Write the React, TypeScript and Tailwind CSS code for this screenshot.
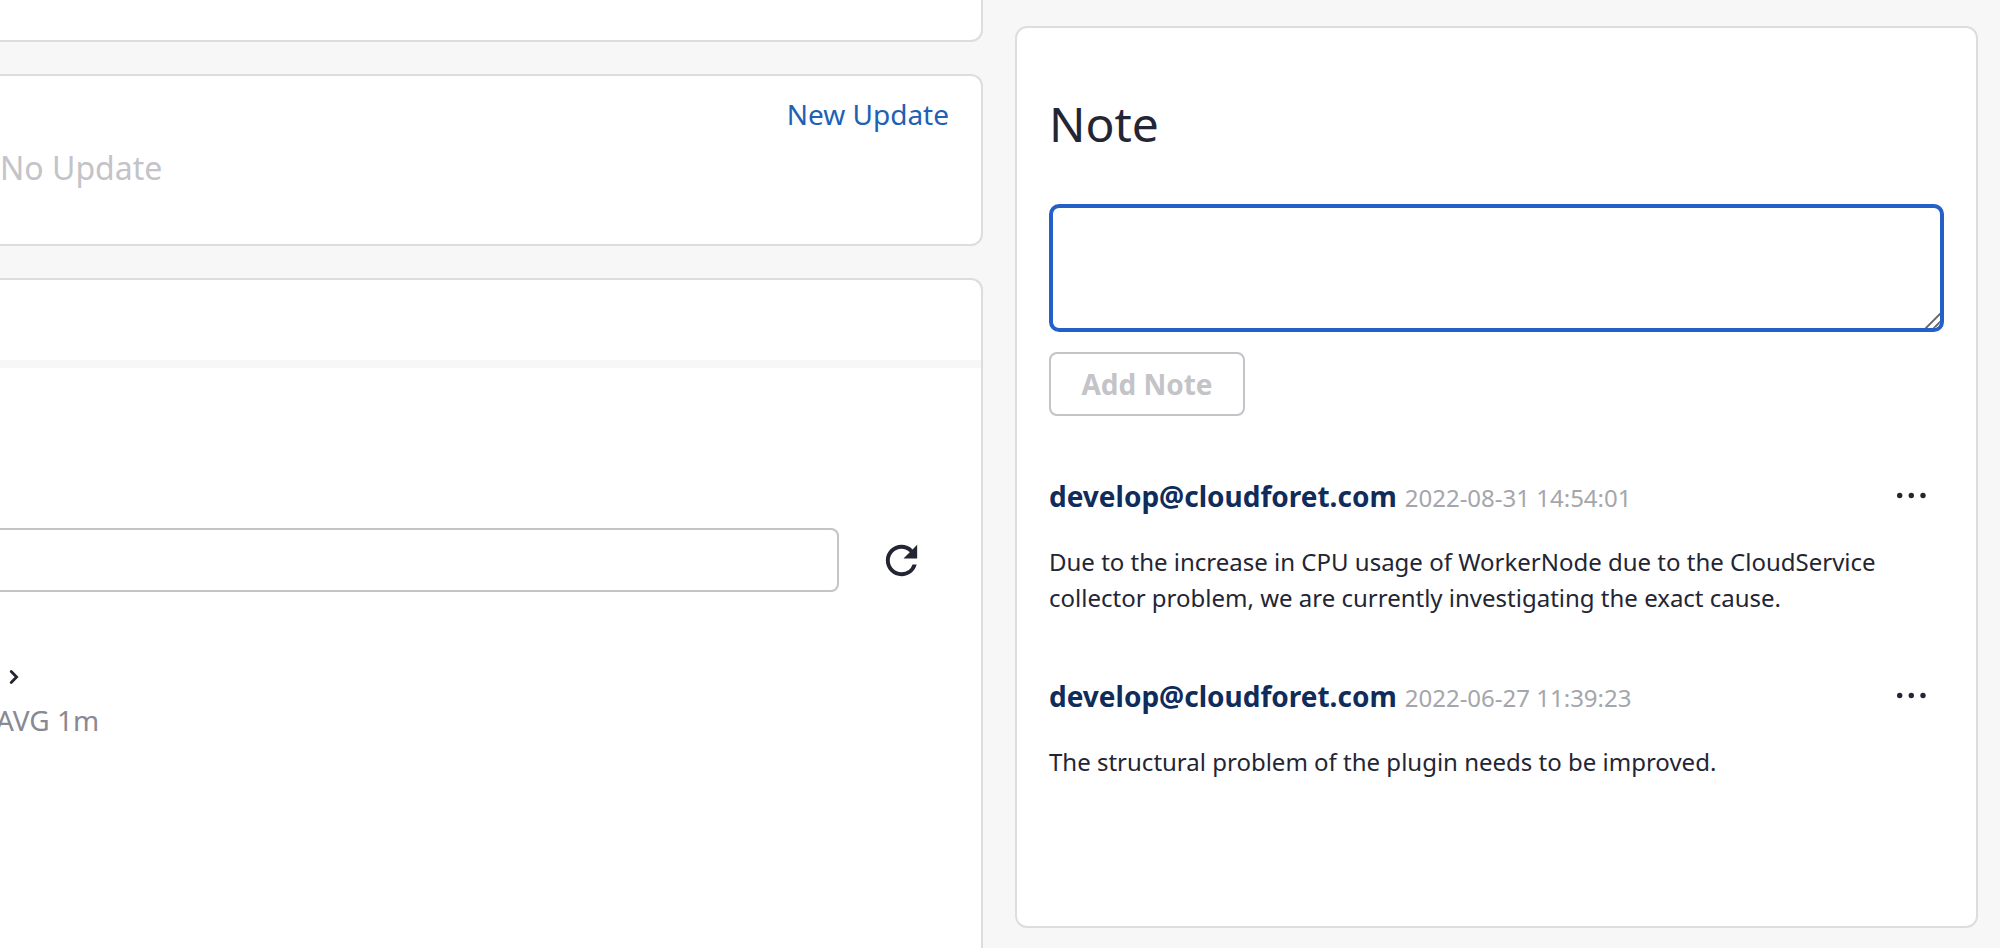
import { useState, type ReactNode } from "react";

type Note = { author: string; date: string; text: string };

const notes: Note[] = [
  {
    author: "develop@cloudforet.com",
    date: "2022-08-31 14:54:01",
    text: "Due to the increase in CPU usage of WorkerNode due to the CloudService collector problem, we are currently investigating the exact cause.",
  },
  {
    author: "develop@cloudforet.com",
    date: "2022-06-27 11:39:23",
    text: "The structural problem of the plugin needs to be improved.",
  },
];

function RefreshIcon() {
  return (
    <svg viewBox="0 0 24 24" className="size-[47px]" fill="currentColor" aria-hidden="true">
      <path d="M17.65 6.35A7.958 7.958 0 0 0 12 4c-4.42 0-7.99 3.58-7.99 8s3.57 8 7.99 8c3.73 0 6.84-2.55 7.73-6h-2.08A5.99 5.99 0 0 1 12 18c-3.31 0-6-2.69-6-6s2.69-6 6-6c1.66 0 3.14.69 4.22 1.78L13 11h7V4l-2.35 2.35z" />
    </svg>
  );
}

function MoreIcon() {
  return (
    <svg viewBox="0 0 32 32" className="size-8" fill="currentColor" aria-hidden="true">
      <circle cx="3.7" cy="15.5" r="2.7" />
      <circle cx="15.3" cy="15.5" r="2.7" />
      <circle cx="27" cy="15.5" r="2.7" />
    </svg>
  );
}

function LeftCard({ className, children }: { className: string; children?: ReactNode }) {
  return (
    <section className={`border-r-2 border-[#dddddf] bg-white ${className}`}>{children}</section>
  );
}

function NoteItem({ note }: { note: Note }) {
  return (
    <li className="mt-15">
      <div className="flex h-[42px] items-center">
        <div className="flex items-baseline gap-2 leading-10">
          <strong className="text-[28px] font-bold text-[#0f2c5b]">{note.author}</strong>
          <time className="text-2xl/10 text-[#a5a6ab]">{note.date}</time>
        </div>
        <button type="button" aria-label="More actions" className="ml-auto flex h-10 w-16 items-center justify-center self-start">
          <MoreIcon />
        </button>
      </div>
      <p className="mt-[26px] text-2xl/9">{note.text}</p>
    </li>
  );
}

export default function App() {
  const [draft, setDraft] = useState("");

  return (
    <main className="grid min-h-screen grid-cols-[983fr_963fr] gap-8 overflow-hidden bg-[#f7f7f7] pr-[22px] font-['Noto_Sans',sans-serif] text-[#232533]">
      <div className="flex min-w-0 flex-col gap-8">
        <LeftCard className="h-[42px] rounded-br-xl border-b-2" />

        <LeftCard className="rounded-r-xl border-y-2 pt-[18px] pb-[54px]">
          <div className="flex justify-end pr-8">
            <a href="#new-update" className="text-[28px] leading-10 text-[#2160b4]">
              New Update
            </a>
          </div>
          <p className="mt-3 text-[32px] leading-11 text-[#c3c3c8]">No Update</p>
        </LeftCard>

        <LeftCard className="flex-1 rounded-tr-xl border-t-2">
          <div className="h-20" />
          <div className="h-2 bg-[#f7f7f7]" />
          <div className="flex items-center gap-[30px] pt-40 pr-12">
            <input
              type="text"
              aria-label="Search"
              className="h-16 min-w-0 flex-1 rounded-r-lg border-y-2 border-r-2 border-[#c3c3c8] bg-white px-4 text-2xl outline-none"
            />
            <button type="button" aria-label="Refresh" className="flex size-16 items-center justify-center">
              <RefreshIcon />
            </button>
          </div>
          <button type="button" aria-label="Show details" className="mt-16 flex h-[42px] w-7 items-center justify-center">
            <svg viewBox="0 0 28 28" className="size-7" fill="none" stroke="currentColor" strokeWidth="2.8" strokeLinecap="round" aria-hidden="true">
              <path d="M11.2 8.6 16.6 14l-5.4 5.4" />
            </svg>
          </button>
          <p className="-ml-1 text-[28px] leading-11 text-[#898995]">AVG 1m</p>
        </LeftCard>
      </div>

      <section className="mt-[26px] mb-5 min-w-0 rounded-xl border-2 border-[#dddddf] bg-white px-8 pt-15">
        <h2 className="text-5xl/18">Note</h2>
        <div className="relative mt-11">
          <textarea
            aria-label="Note"
            value={draft}
            onChange={(e) => setDraft(e.target.value)}
            className="block h-32 w-full resize-y rounded-[10px] border-4 border-[#2560c9] bg-white px-4 py-3 text-2xl outline-none"
          />
          <svg
            viewBox="0 0 18 18"
            className="pointer-events-none absolute right-1 bottom-1 size-[18px] rounded-br-md bg-white"
            fill="none"
            stroke="#666666"
            strokeWidth="1.8"
            aria-hidden="true"
          >
            <path d="M3.5 18.5 18.5 3.5M11.5 18.5l7-7" />
          </svg>
        </div>
        <button
          type="button"
          disabled={draft.trim() === ""}
          className="mt-5 block h-16 min-w-49 rounded-lg border-2 border-[#c3c3c8] px-[30px] text-[28px] font-bold text-[#c3c3c8]"
        >
          Add Note
        </button>
        <ul>
          {notes.map((note) => (
            <NoteItem key={note.date} note={note} />
          ))}
        </ul>
      </section>
    </main>
  );
}
